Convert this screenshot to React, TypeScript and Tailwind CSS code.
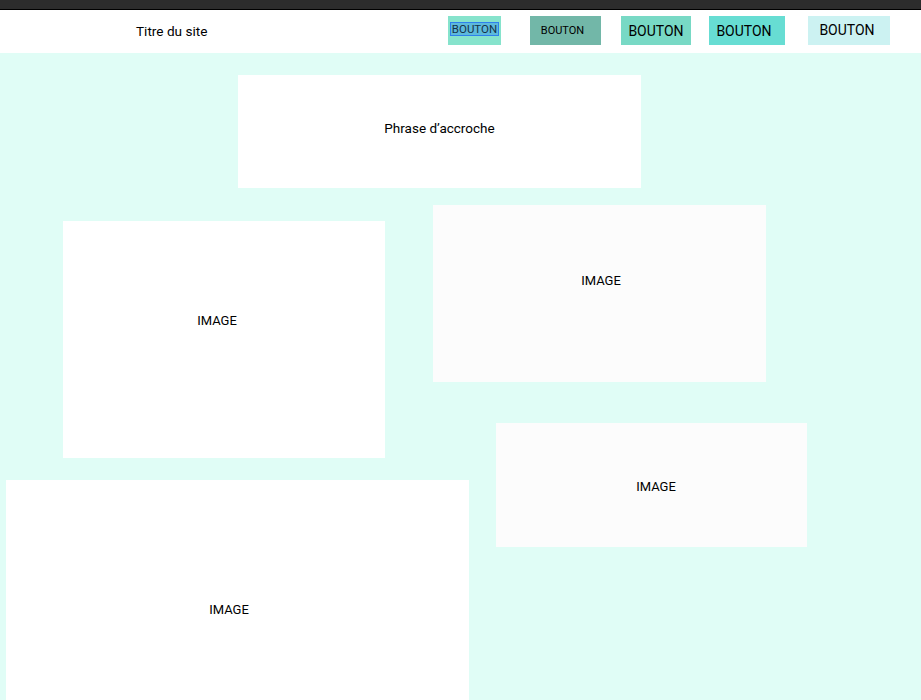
import React from "react";

export default function App() {
  return (
    <div className="w-full h-[700px] overflow-hidden bg-[#e0fdf6] text-black" style={{ fontFamily: "Roboto, 'Noto Sans', sans-serif" }}>
      <div className="h-[10px] bg-[#2c2c2c] border-b border-black" />
      <header className="h-[43px] bg-white flex items-start">
        <div className="w-[448px] shrink-0 pl-[136px] pt-[13px] text-[13.6px] leading-[17px]">Titre du site</div>
        <div className="flex items-start pt-[6px]">
          <div className="w-[53px] h-[29px] bg-[#86e3cc] flex justify-center pt-[6px]">
            <span className="h-[14px] px-[1px] bg-[#5cb9dc] border border-[#2f80ed] text-[11.5px] leading-[12px] text-[#163346]">BOUTON</span>
          </div>
          <div className="ml-[29px] w-[71px] h-[29px] bg-[#72b7a8] flex items-center justify-center pr-[6px] pt-[1px] text-[11px]">BOUTON</div>
          <div className="ml-[20px] w-[70px] h-[29px] bg-[#78d9c5] flex items-center justify-center text-[14px] pt-[2px]">BOUTON</div>
          <div className="ml-[18px] w-[76px] h-[29px] bg-[#67ddd3] flex items-center justify-center text-[14px] pr-[6px] pt-[2px]">BOUTON</div>
          <div className="ml-[23px] w-[82px] h-[29px] bg-[#ccf2f2] flex items-center justify-center text-[14px] pr-[4px]">BOUTON</div>
        </div>
      </header>
      <main>
        <div className="mt-[22px] ml-[238px] w-[403px] h-[113px] bg-white flex items-center justify-center pb-[6px] text-[13.5px]">Phrase d’accroche</div>
        <div className="flex">
          <div className="w-[433px] shrink-0 flex flex-col">
            <div className="mt-[33px] ml-[63px] w-[322px] h-[237px] bg-white flex items-center justify-center pb-[38px] pr-[14px] text-[13px]">IMAGE</div>
            <div className="mt-[22px] ml-[6px] w-[463px] h-[258px] bg-white flex items-center justify-center pr-[17px] pt-[2px] text-[13px]">IMAGE</div>
          </div>
          <div className="flex flex-col">
            <div className="mt-[17px] w-[333px] h-[177px] bg-[#fcfcfc] flex items-center justify-center pb-[26px] pl-[3px] text-[13px]">IMAGE</div>
            <div className="mt-[41px] ml-[63px] w-[311px] h-[124px] bg-[#fcfcfc] flex items-center justify-center pt-[3px] pl-[9px] text-[13px]">IMAGE</div>
          </div>
        </div>
      </main>
    </div>
  );
}
